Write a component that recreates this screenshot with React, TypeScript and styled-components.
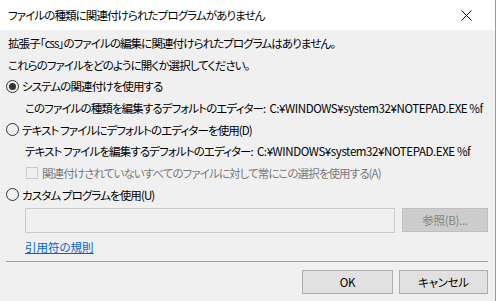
import React from "react";
import styled, { createGlobalStyle } from "styled-components";

const Global = createGlobalStyle`
  html, body { margin: 0; padding: 0; background: #f0f0f0; }
  body {
    font-family: "Noto Sans CJK JP", "Noto Sans", sans-serif;
    font-size: 11.5px;
    color: #000;
    font-feature-settings: "palt";
    letter-spacing: -0.9px;
  }
`;

const Window = styled.div`
  width: 495px;
  height: 301px;
  border-right: 1px solid #9a9a9a;
  display: flex;
  flex-direction: column;
  background: #f0f0f0;
  overflow: hidden;
`;

const TitleBar = styled.div`
  height: 30px;
  flex: none;
  background: #fff;
  display: flex;
  align-items: center;
  justify-content: space-between;
  padding-left: 8px;
`;

const CloseBtn = styled.div`
  width: 46px;
  height: 30px;
  display: flex;
  align-items: center;
  justify-content: center;
  padding-right: 12px;
  box-sizing: border-box;
`;

const Body = styled.div`
  flex: 1;
  display: flex;
  flex-direction: column;
  padding: 2px 7px 0 8px;
`;

const Line = styled.div<{ $indent?: number; $muted?: boolean }>`
  height: 21.7px;
  padding-left: ${(p) => p.$indent ?? 0}px;
  display: flex;
  align-items: center;
  white-space: pre;
  color: ${(p) => (p.$muted ? "#7a7a7a" : "#000")};
`;

const Latin = styled.span`
  letter-spacing: -0.4px;
  margin-left: 4px;
`;

const RadioCircle = styled.span<{ $checked?: boolean }>`
  box-sizing: border-box;
  flex: none;
  width: 13px;
  height: 13px;
  border-radius: 50%;
  border: 1px solid #333;
  margin-left: -2px;
  margin-right: 3px;
  display: inline-flex;
  align-items: center;
  justify-content: center;
  &::after {
    content: "";
    width: 7px;
    height: 7px;
    border-radius: 50%;
    background: ${(p) => (p.$checked ? "#333" : "transparent")};
  }
`;

const CheckBox = styled.span`
  box-sizing: border-box;
  flex: none;
  width: 12px;
  height: 12px;
  border: 1px solid #cccccc;
  background: #f0f0f0;
  margin-left: 1px;
  margin-right: 4px;
`;

const InputRow = styled.div`
  display: flex;
  align-items: center;
  gap: 7px;
  padding-left: 17px;
  margin-top: 2px;
  height: 25px;
`;

const TextInput = styled.div`
  box-sizing: border-box;
  width: 370px;
  height: 25px;
  border: 1px solid #cccccc;
  background: #f0f0f0;
`;

const Button = styled.div<{ $disabled?: boolean; $w: number }>`
  box-sizing: border-box;
  width: ${(p) => p.$w}px;
  height: 24px;
  display: flex;
  align-items: center;
  justify-content: center;
  letter-spacing: -0.3px;
  border: 1px solid ${(p) => (p.$disabled ? "#bfbfbf" : "#adadad")};
  background: ${(p) => (p.$disabled ? "#cccccc" : "#e1e1e1")};
  color: ${(p) => (p.$disabled ? "#838383" : "#000")};
`;

const LinkRow = styled.div`
  height: 21px;
  margin-top: 4px;
  padding-left: 17px;
  display: flex;
  align-items: center;
`;

const Link = styled.a`
  color: #0066cc;
  text-decoration: underline;
  letter-spacing: 0;
  cursor: pointer;
`;

const Separator = styled.div`
  height: 1px;
  background: #a0a0a0;
  margin: 3px 0 0 -2px;
`;

const Footer = styled.div`
  display: flex;
  justify-content: flex-end;
  gap: 6px;
  padding-top: 8px;
`;

export default function App() {
  return (
    <>
      <Global />
      <Window>
        <TitleBar>
          <span>ファイルの種類に関連付けられたプログラムがありません</span>
          <CloseBtn>
            <svg width="11" height="11" viewBox="0 0 11 11">
              <path d="M0.5 0.5 L10.5 10.5 M10.5 0.5 L0.5 10.5" stroke="#000" strokeWidth="1" />
            </svg>
          </CloseBtn>
        </TitleBar>
        <Body>
          <Line>拡張子「css」のファイルの編集に関連付けられたプログラムはありません。</Line>
          <Line>これらのファイルをどのように開くか選択してください。</Line>
          <Line>
            <RadioCircle $checked />
            システムの関連付けを使用する
          </Line>
          <Line $indent={17}>
            このファイルの種類を編集するデフォルトのエディター:
            <Latin>C:¥WINDOWS¥system32¥NOTEPAD.EXE %f</Latin>
          </Line>
          <Line>
            <RadioCircle />
            テキスト ファイルにデフォルトのエディターを使用(D)
          </Line>
          <Line $indent={17}>
            テキスト ファイルを編集するデフォルトのエディター:
            <Latin>C:¥WINDOWS¥system32¥NOTEPAD.EXE %f</Latin>
          </Line>
          <Line $indent={17} $muted>
            <CheckBox />
            関連付けされていないすべてのファイルに対して常にこの選択を使用する(A)
          </Line>
          <Line>
            <RadioCircle />
            カスタム プログラムを使用(U)
          </Line>
          <InputRow>
            <TextInput />
            <Button $disabled $w={86}>参照(B)...</Button>
          </InputRow>
          <LinkRow>
            <Link>引用符の規則</Link>
          </LinkRow>
          <Separator />
          <Footer>
            <Button $w={91}>OK</Button>
            <Button $w={89}>キャンセル</Button>
          </Footer>
        </Body>
      </Window>
    </>
  );
}
